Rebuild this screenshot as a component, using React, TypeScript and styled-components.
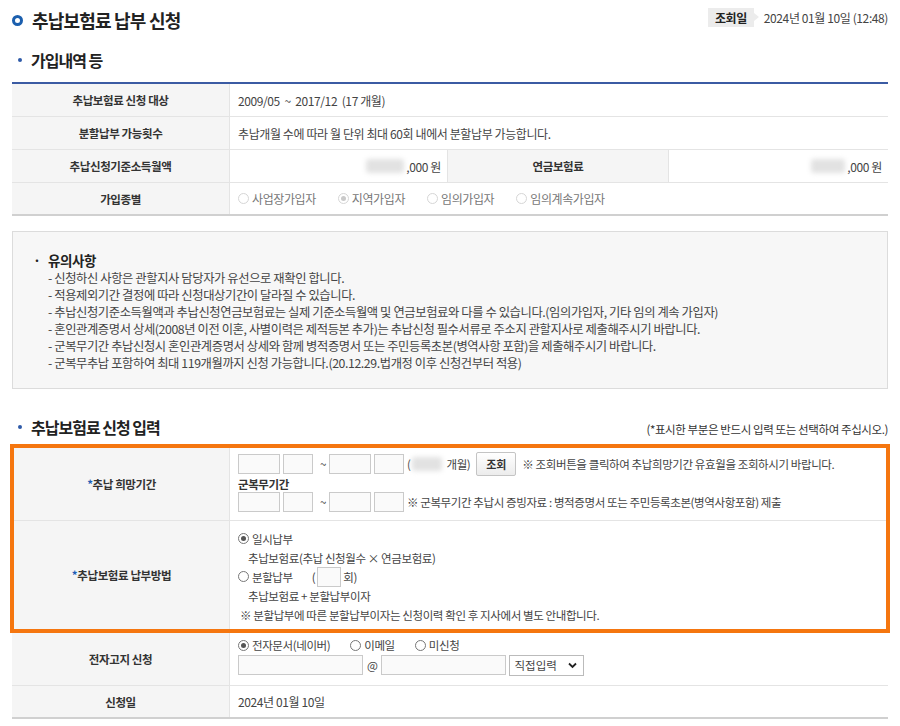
import React from 'react';
import styled, { createGlobalStyle } from 'styled-components';

const GlobalStyle = createGlobalStyle`
  * { box-sizing: border-box; }
  body {
    margin: 0;
    background: #fff;
    color: #333;
    font-family: "Noto Sans CJK KR", "Noto Sans", sans-serif;
    font-size: 12px;
    letter-spacing: -0.4px;
  }
`;

const Page = styled.div`
  width: 900px;
  padding: 7px 12px 0;
`;

const Header = styled.header`
  display: flex;
  justify-content: space-between;
  align-items: flex-start;
  height: 26px;
`;

const Title = styled.h1`
  margin: 0;
  display: flex;
  align-items: center;
  gap: 9px;
  height: 26px;
  font-size: 18px;
  font-weight: 700;
  letter-spacing: -0.8px;
  color: #222;
`;

const TitleMark = styled.span`
  width: 11px;
  height: 11px;
  border: 3px solid #1b5fae;
  border-radius: 50%;
`;

const Meta = styled.div`
  display: flex;
  align-items: center;
  gap: 10px;
  margin-top: 1px;
`;

const Badge = styled.span`
  position: relative;
  height: 19px;
  line-height: 19px;
  padding: 0 7px;
  background: #ececec;
  font-weight: 700;
  color: #222;
  &::after {
    content: '';
    position: absolute;
    right: -5px;
    top: 5px;
    border-left: 5px solid #ececec;
    border-top: 4.5px solid transparent;
    border-bottom: 4.5px solid transparent;
  }
`;

const DateText = styled.span`
  color: #444;
`;

const SectionHead = styled.div<{ $mt: number; $mb: number }>`
  display: flex;
  justify-content: space-between;
  align-items: center;
  height: 20px;
  margin: ${p => p.$mt}px 0 ${p => p.$mb}px;
`;

const SectionTitle = styled.h2`
  margin: 0;
  display: flex;
  align-items: center;
  gap: 9px;
  padding-left: 6px;
  font-size: 16px;
  font-weight: 700;
  letter-spacing: -1px;
  color: #222;
  &::before {
    content: '';
    width: 4px;
    height: 4px;
    border-radius: 50%;
    background: #2f5aa8;
  }
`;

const Note = styled.span`
  font-size: 11.5px;
  color: #333;
  margin-top: 4px;
`;

const Table = styled.div<{ $top?: boolean }>`
  border-top: ${p => (p.$top ? '2px solid #3b5ba3' : 'none')};
  border-bottom: 2px solid #d0d0d0;
`;

const Row = styled.div<{ $cols?: string; $h: number }>`
  display: grid;
  grid-template-columns: ${p => p.$cols ?? '218px 1fr'};
  min-height: ${p => p.$h}px;
  & + & {
    border-top: 1px solid #e4e4e4;
  }
`;

const Label = styled.div`
  background: #f5f5f5;
  display: flex;
  align-items: center;
  justify-content: center;
  font-size: 11.5px;
  font-weight: 700;
  color: #333;
  border-right: 1px solid #e4e4e4;
`;

const Req = styled.span`
  color: #1f5fb5;
`;

const Value = styled.div<{ $right?: boolean; $divide?: boolean; $stack?: boolean; $pad?: string; $small?: boolean }>`
  display: flex;
  flex-direction: ${p => (p.$stack ? 'column' : 'row')};
  align-items: ${p => (p.$stack ? 'flex-start' : 'center')};
  justify-content: ${p => (p.$right ? 'flex-end' : 'flex-start')};
  padding: ${p => p.$pad ?? '0 8px'};
  font-size: ${p => (p.$small ? '11.5px' : '12px')};
  color: #444;
  border-right: ${p => (p.$divide ? '1px solid #e4e4e4' : 'none')};
`;

const Masked = styled.span<{ $w: number }>`
  display: inline-block;
  width: ${p => p.$w}px;
  height: 14px;
  margin-right: 2px;
  border-radius: 3px;
  background: #e2e2e2;
  filter: blur(2.5px);
`;

const RadioGroup = styled.div<{ $gap: number }>`
  display: flex;
  align-items: center;
  gap: ${p => p.$gap}px;
`;

const RadioItem = styled.span<{ $muted?: boolean }>`
  display: inline-flex;
  align-items: center;
  gap: 3px;
  color: ${p => (p.$muted ? '#777' : '#444')};
`;

const RadioMark = styled.span<{ $on?: boolean; $muted?: boolean }>`
  flex: none;
  width: 11px;
  height: 11px;
  border-radius: 50%;
  border: 1px solid ${p => (p.$muted ? '#d6d6d6' : '#777')};
  background: #fff;
  display: inline-flex;
  align-items: center;
  justify-content: center;
  &::after {
    content: '';
    width: 5px;
    height: 5px;
    border-radius: 50%;
    background: ${p => (p.$muted ? '#cacaca' : '#555')};
    display: ${p => (p.$on ? 'block' : 'none')};
  }
`;

const Notice = styled.div`
  margin-top: 15px;
  border: 1px solid #dcdcdc;
  background: #f7f7f7;
  padding: 19px 20px 16px;
`;

const NoticeHead = styled.div`
  display: flex;
  align-items: center;
  height: 19px;
  line-height: 19px;
  font-size: 13.5px;
  font-weight: 700;
  color: #222;
  &::before {
    content: '·';
    width: 15px;
  }
`;

const NoticeList = styled.ul`
  margin: 0;
  padding: 0 0 0 15px;
  list-style: none;
  line-height: 17px;
  font-size: 12.3px;
  color: #444;
`;

const Highlight = styled.div`
  margin: 0 -2px;
  border: 4px solid #f5760f;
`;

const Line = styled.div<{ $h: number; $indent?: number; $bold?: boolean }>`
  display: flex;
  align-items: center;
  height: ${p => p.$h}px;
  padding-left: ${p => p.$indent ?? 0}px;
  font-weight: ${p => (p.$bold ? 700 : 400)};
  color: ${p => (p.$bold ? '#333' : '#444')};
  white-space: nowrap;
`;

const Field = styled.input<{ $w: number; $ml?: number }>`
  width: ${p => p.$w}px;
  height: 20px;
  margin: 0 0 0 ${p => p.$ml ?? 0}px;
  padding: 0 4px;
  border: 1px solid #cacaca;
  background: #fafafa;
  font: inherit;
`;

const Glyph = styled.span<{ $l?: number; $r?: number }>`
  margin: 0 ${p => p.$r ?? 0}px 0 ${p => p.$l ?? 0}px;
`;

const SmallButton = styled.button`
  height: 24px;
  width: 40px;
  margin: 0 6px;
  padding: 0;
  border: 1px solid #c4c4c4;
  border-radius: 2px;
  background: linear-gradient(#ffffff, #ececec);
  font: inherit;
  font-size: 11px;
  font-weight: 700;
  color: #333;
`;

const SelectWrap = styled.div`
  position: relative;
  width: 75px;
  height: 21px;
  margin-left: 3px;
  svg {
    position: absolute;
    right: 7px;
    top: 7px;
    pointer-events: none;
  }
`;

const Select = styled.select`
  appearance: none;
  width: 100%;
  height: 100%;
  border: 1px solid #bbb;
  background: #fff;
  padding: 0 4px;
  font: inherit;
  color: #444;
`;

const Radio = ({ label, on, muted }: { label: string; on?: boolean; muted?: boolean }) => (
  <RadioItem $muted={muted}>
    <RadioMark $on={on} $muted={muted} />
    {label}
  </RadioItem>
);

const notices = [
  '- 신청하신 사항은 관할지사 담당자가 유선으로 재확인 합니다.',
  '- 적용제외기간 결정에 따라 신청대상기간이 달라질 수 있습니다.',
  '- 추납신청기준소득월액과 추납신청연금보험료는 실제 기준소득월액 및 연금보험료와 다를 수 있습니다.(임의가입자, 기타 임의 계속 가입자)',
  '- 혼인관계증명서 상세(2008년 이전 이혼, 사별이력은 제적등본 추가)는 추납신청 필수서류로 주소지 관할지사로 제출해주시기 바랍니다.',
  '- 군복무기간 추납신청시 혼인관계증명서 상세와 함께 병적증명서 또는 주민등록초본(병역사항 포함)을 제출해주시기 바랍니다.',
  '- 군복무추납 포함하여 최대 119개월까지 신청 가능합니다.(20.12.29.법개정 이후 신청건부터 적용)',
];

const PeriodInputs = () => (
  <>
    <Field $w={42} />
    <Field $w={30} $ml={3} />
    <Glyph $l={7} $r={3}>~</Glyph>
    <Field $w={42} />
    <Field $w={30} $ml={3} />
  </>
);

export default function App() {
  return (
    <Page>
      <GlobalStyle />
      <Header>
        <Title>
          <TitleMark />
          추납보험료 납부 신청
        </Title>
        <Meta>
          <Badge>조회일</Badge>
          <DateText>2024년 01월 10일 (12:48)</DateText>
        </Meta>
      </Header>

      <SectionHead $mt={17} $mb={12}>
        <SectionTitle>가입내역 등</SectionTitle>
      </SectionHead>

      <Table $top>
        <Row $h={32}>
          <Label>추납보험료 신청 대상</Label>
          <Value>2009/05&nbsp; ~ &nbsp;2017/12 &nbsp;(17 개월)</Value>
        </Row>
        <Row $h={33}>
          <Label>분할납부 가능횟수</Label>
          <Value>추납개월 수에 따라 월 단위 최대 60회 내에서 분할납부 가능합니다.</Value>
        </Row>
        <Row $h={33} $cols="218px 218px 221px 1fr">
          <Label>추납신청기준소득월액</Label>
          <Value $right $divide $pad="0 6px">
            <Masked $w={38} />
            ,000 원
          </Value>
          <Label>연금보험료</Label>
          <Value $right $pad="0 6px">
            <Masked $w={34} />
            ,000 원
          </Value>
        </Row>
        <Row $h={32}>
          <Label>가입종별</Label>
          <Value>
            <RadioGroup $gap={22}>
              <Radio label="사업장가입자" muted />
              <Radio label="지역가입자" muted on />
              <Radio label="임의가입자" muted />
              <Radio label="임의계속가입자" muted />
            </RadioGroup>
          </Value>
        </Row>
      </Table>

      <Notice>
        <NoticeHead>유의사항</NoticeHead>
        <NoticeList>
          {notices.map(n => (
            <li key={n}>{n}</li>
          ))}
        </NoticeList>
      </Notice>

      <SectionHead $mt={28} $mb={7}>
        <SectionTitle>추납보험료 신청 입력</SectionTitle>
        <Note>(*표시한 부분은 반드시 입력 또는 선택하여 주십시오.)</Note>
      </SectionHead>

      <Highlight>
        <Row $h={72} $cols="216px 1fr">
          <Label>
            <Req>*</Req>추납 희망기간
          </Label>
          <Value $stack $small $pad="4px 8px 8px">
            <Line $h={24}>
              <PeriodInputs />
              <Glyph $l={3} $r={2}>(</Glyph>
              <Masked $w={30} />
              <Glyph $l={2}>개월)</Glyph>
              <SmallButton type="button">조회</SmallButton>
              <span>※ 조회버튼을 클릭하여 추납희망기간 유효월을 조회하시기 바랍니다.</span>
            </Line>
            <Line $h={16} $bold>군복무기간</Line>
            <Line $h={20}>
              <PeriodInputs />
              <Glyph $l={3}>※ 군복무기간 추납시 증빙자료 : 병적증명서 또는 주민등록초본(병역사항포함) 제출</Glyph>
            </Line>
          </Value>
        </Row>
        <Row $h={108} $cols="216px 1fr">
          <Label>
            <Req>*</Req>추납보험료 납부방법
          </Label>
          <Value $stack $small $pad="8px 8px 5px">
            <Line $h={19}>
              <Radio label="일시납부" on />
            </Line>
            <Line $h={19} $indent={10}>추납보험료(추납 신청월수 × 연금보험료)</Line>
            <Line $h={19}>
              <Radio label="분할납부" />
              <Glyph $l={19} $r={2}>(</Glyph>
              <Field $w={24} />
              <Glyph $l={2}>회)</Glyph>
            </Line>
            <Line $h={19} $indent={10}>추납보험료 + 분할납부이자</Line>
            <Line $h={19} $indent={2}>※ 분할납부에 따른 분할납부이자는 신청이력 확인 후 지사에서 별도 안내합니다.</Line>
          </Value>
        </Row>
      </Highlight>

      <Table>
        <Row $h={52}>
          <Label>전자고지 신청</Label>
          <Value $stack $small $pad="3px 8px 8px">
            <Line $h={18}>
              <RadioGroup $gap={20}>
                <Radio label="전자문서(네이버)" on />
                <Radio label="이메일" />
                <Radio label="미신청" />
              </RadioGroup>
            </Line>
            <Line $h={22}>
              <Field $w={125} />
              <Glyph $l={4} $r={4}>@</Glyph>
              <Field $w={125} />
              <SelectWrap>
                <Select defaultValue="direct">
                  <option value="direct">직접입력</option>
                </Select>
                <svg width="9" height="7" viewBox="0 0 9 7">
                  <path d="M1 1.5 L4.5 5 L8 1.5" fill="none" stroke="#222" strokeWidth="1.8" />
                </svg>
              </SelectWrap>
            </Line>
          </Value>
        </Row>
        <Row $h={32}>
          <Label>신청일</Label>
          <Value>2024년 01월 10일</Value>
        </Row>
      </Table>
    </Page>
  );
}
